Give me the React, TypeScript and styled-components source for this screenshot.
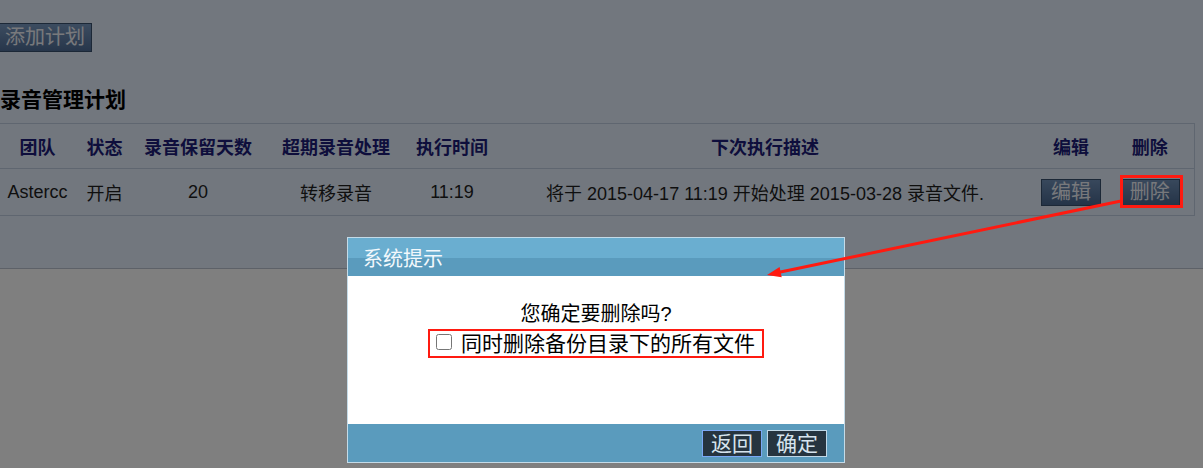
import styled, { createGlobalStyle } from "styled-components";

const GlobalStyle = createGlobalStyle`
  html, body {
    margin: 0;
    padding: 0;
    background: #ffffff;
    height: 468px;
    overflow: hidden;
  }
  body {
    font-family: "Liberation Sans", "Noto Sans CJK SC", sans-serif;
  }
`;

const Panel = styled.div`
  background: #e4eefc;
  border-bottom: 1px solid #bac2d0;
  padding: 23px 0 52px;
`;

const AddButton = styled.button`
  display: block;
  height: 29px;
  margin: 0;
  padding: 0 6px 0 5px;
  font: 20px/27px "Liberation Sans", "Noto Sans CJK SC", sans-serif;
  color: #f0f2f8;
  background: linear-gradient(#7898c0, #4f6d96);
  border: 1px solid #38506e;
  border-left: none;
`;

const Title = styled.h3`
  margin: 36px 0 11px;
  font-size: 21px;
  line-height: 24px;
  font-weight: bold;
  color: #000;
`;

const Table = styled.table`
  width: 1194px;
  table-layout: fixed;
  border-collapse: collapse;
  border-top: 1px solid #bfcde0;
  border-right: 1px solid #bfcde0;
  border-bottom: 1px solid #bfcde0;
`;

const Th = styled.th`
  height: 44px;
  padding: 0;
  font-size: 18px;
  font-weight: bold;
  color: #1c1c78;
  text-align: center;
  border-bottom: 1px solid #bfcde0;
`;

const Td = styled.td`
  height: 46px;
  padding: 0;
  font-size: 18px;
  color: #1e1e1e;
  text-align: center;
`;

const RowButton = styled.button`
  width: 60px;
  height: 27px;
  padding: 0;
  font: 20px/25px "Liberation Sans", "Noto Sans CJK SC", sans-serif;
  color: #f0f2f8;
  background: linear-gradient(#7090b8, #4a6890);
  border: 1px solid #39506e;
`;

const Overlay = styled.div`
  position: fixed;
  inset: 0;
  background: rgba(0, 0, 0, 0.5);
`;

const Dialog = styled.div`
  position: fixed;
  left: 347px;
  top: 237px;
  width: 496px;
  height: 224px;
  display: flex;
  flex-direction: column;
  background: #ffffff;
  border: 1px solid #c4dbe8;
`;

const DialogHeader = styled.div`
  height: 38px;
  padding-left: 15px;
  display: flex;
  align-items: center;
  font-size: 20px;
  color: #f2f8fc;
  background: linear-gradient(#6aaed0 0, #6aaed0 20px, #5a9bbd 20px, #5a9bbd 100%);
`;

const DialogBody = styled.div`
  flex: 1;
  padding-top: 24px;
  display: flex;
  flex-direction: column;
  align-items: center;
  font-size: 20px;
  line-height: 29px;
  color: #000;
`;

const CheckLabel = styled.label`
  display: flex;
  align-items: center;
  gap: 9px;
  height: 25px;
  padding: 0 7px 0 6px;
  border: 2px solid #ff1a10;
  font-size: 21px;
`;

const CheckBox = styled.input`
  width: 16px;
  height: 16px;
  margin: 0 0 4px;
`;

const DialogFooter = styled.div`
  height: 38px;
  padding-right: 17px;
  display: flex;
  justify-content: flex-end;
  align-items: center;
  gap: 5px;
  background: #5a9bbd;
`;

const FooterButton = styled.button<{ focused?: boolean }>`
  width: 60px;
  height: 27px;
  padding: 0;
  font: 21px/25px "Liberation Sans", "Noto Sans CJK SC", sans-serif;
  color: #d6e4ee;
  background: #26343f;
  border: 1px solid ${(p) => (p.focused ? "#7aa8f4" : "#c0d8e8")};
`;

const Annotation = styled.svg`
  position: fixed;
  left: 0;
  top: 0;
  pointer-events: none;
`;

const columns = [75, 59, 128, 148, 84, 542, 70, 88];
const headers = ["团队", "状态", "录音保留天数", "超期录音处理", "执行时间", "下次执行描述", "编辑", "删除"];

export default function App() {
  return (
    <>
      <GlobalStyle />
      <Panel>
        <AddButton>添加计划</AddButton>
        <Title>录音管理计划</Title>
        <Table>
          <colgroup>
            {columns.map((w, i) => (
              <col key={i} style={{ width: w }} />
            ))}
          </colgroup>
          <thead>
            <tr>
              {headers.map((h) => (
                <Th key={h}>{h}</Th>
              ))}
            </tr>
          </thead>
          <tbody>
            <tr>
              <Td>Astercc</Td>
              <Td>开启</Td>
              <Td>20</Td>
              <Td>转移录音</Td>
              <Td>11:19</Td>
              <Td>将于 2015-04-17 11:19 开始处理 2015-03-28 录音文件.</Td>
              <Td>
                <RowButton>编辑</RowButton>
              </Td>
              <Td>
                <RowButton>删除</RowButton>
              </Td>
            </tr>
          </tbody>
        </Table>
      </Panel>

      <Overlay />

      <Dialog>
        <DialogHeader>系统提示</DialogHeader>
        <DialogBody>
          <div>您确定要删除吗?</div>
          <CheckLabel>
            <CheckBox type="checkbox" />
            同时删除备份目录下的所有文件
          </CheckLabel>
        </DialogBody>
        <DialogFooter>
          <FooterButton focused>返回</FooterButton>
          <FooterButton>确定</FooterButton>
        </DialogFooter>
      </Dialog>

      <Annotation width="1203" height="468" viewBox="0 0 1203 468">
        <rect x="1121.5" y="176.5" width="60" height="30" fill="none" stroke="#ff1a10" strokeWidth="3" />
        <line x1="1121" y1="201" x2="778" y2="272.5" stroke="#ff1a10" strokeWidth="3" />
        <polygon points="767,275 781.7,277.2 779.6,267" fill="#ff1a10" />
      </Annotation>
    </>
  );
}
